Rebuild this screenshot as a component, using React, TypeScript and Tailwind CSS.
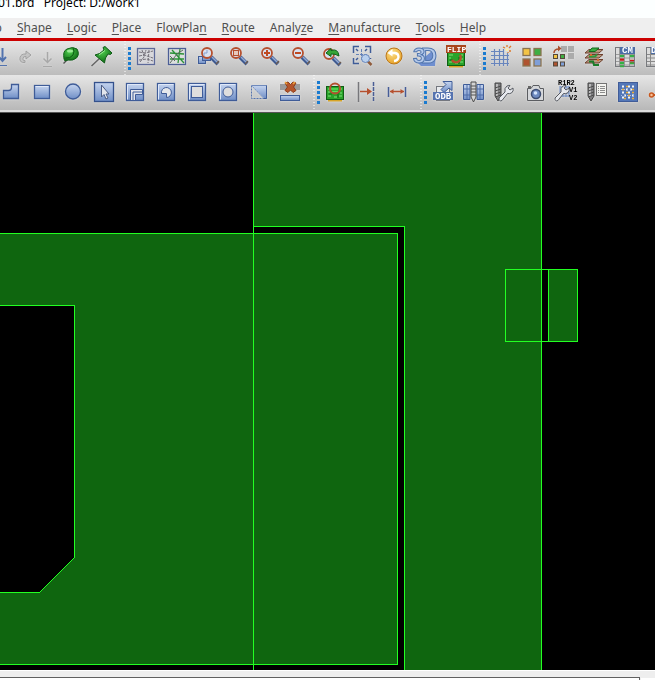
import type { ReactNode } from 'react';

const menus = [
  { before: '', key: 'S', after: 'hape' },
  { before: '', key: 'L', after: 'ogic' },
  { before: '', key: 'P', after: 'lace' },
  { before: 'FlowPla', key: 'n', after: '' },
  { before: '', key: 'R', after: 'oute' },
  { before: 'Analy', key: 'z', after: 'e' },
  { before: '', key: 'M', after: 'anufacture' },
  { before: '', key: 'T', after: 'ools' },
  { before: '', key: 'H', after: 'elp' },
];

// Shared paint servers for the toolbar icons
function IconDefs() {
  return (
    <svg className="absolute h-0 w-0" aria-hidden="true">
      <defs>
        <linearGradient id="steel" x1="0" y1="0" x2="0" y2="1">
          <stop offset="0" stopColor="#c6d5ef" />
          <stop offset="1" stopColor="#6f8ec6" />
        </linearGradient>
        <radialGradient id="leaf" cx="0.4" cy="0.3" r="0.8">
          <stop offset="0" stopColor="#4fd04f" />
          <stop offset="1" stopColor="#065c0c" />
        </radialGradient>
        <radialGradient id="gold" cx="0.4" cy="0.3" r="0.8">
          <stop offset="0" stopColor="#fbe08a" />
          <stop offset="1" stopColor="#e59a1c" />
        </radialGradient>
      </defs>
    </svg>
  );
}

function Tool({ label, width = 'w-[31px]', children }: { label: string; width?: string; children: ReactNode }) {
  return (
    <button
      type="button"
      aria-label={label}
      title={label}
      className={`flex h-[31px] shrink-0 justify-center overflow-hidden ${width}`}
    >
      <svg
        viewBox="0 0 31 31"
        fill="none"
        className="h-[31px] w-[31px] shrink-0 drop-shadow-[0_0_1px_#e0e0e0]"
        aria-hidden="true"
      >
        {children}
      </svg>
    </button>
  );
}

function Grip() {
  return (
    <div className="flex h-full w-[7px] shrink-0 items-center justify-between">
      <svg className="h-full w-[2px]" aria-hidden="true">
        <line x1="1" y1="0" x2="1" y2="40" stroke="#fff" strokeWidth="1" strokeDasharray="1 2" />
      </svg>
      <svg className="h-[23px] w-[3px]" aria-hidden="true">
        <line x1="1.5" y1="0" x2="1.5" y2="23" stroke="#1a7bd0" strokeWidth="3" strokeDasharray="3 2" />
      </svg>
    </div>
  );
}

const edge = '#3f5c98';

function Frame({ children }: { children?: ReactNode }) {
  return (
    <>
      <rect x="6.5" y="6.5" width="17" height="17" fill="url(#steel)" stroke={edge} strokeWidth="1.3" />
      <path d="M7.5 22.5V7.5H22.5" stroke="#dfe8f8" />
      {children}
    </>
  );
}

function Lens({ x, y, r = 5, children }: { x: number; y: number; r?: number; children?: ReactNode }) {
  return (
    <>
      <path d={`M${x + r - 1} ${y + r - 1}L${x + r + 6} ${y + r + 6}`} stroke="#3f5a91" strokeWidth="4" />
      <path d={`M${x + r} ${y + r - 1}L${x + r + 6} ${y + r + 5}`} stroke="#93aad4" strokeWidth="1.5" />
      <path d={`M${x + r + 4} ${y + r + 6}L${x + r + 7} ${y + r + 3}`} stroke="#6b5b50" strokeWidth="1.5" />
      <circle cx={x} cy={y} r={r} fill="#d9e2f1" stroke="#b5502f" strokeWidth="1.8" />
      {children}
    </>
  );
}

function Board({ y }: { y: number }) {
  return (
    <>
      <path d={`M8 ${y + 14.5}H22`} stroke="#d7a427" strokeWidth="2" />
      <rect x="6.5" y={y + 0.5} width="17" height="13" fill="#2aa32a" stroke="#0f5f14" />
      <path d={`M8 ${y + 3}H12M8 ${y + 6}H10M20 ${y + 3}H22M20 ${y + 7}H22M8 ${y + 10}H11M14 ${y + 11}H17M19 ${y + 10}H22`} stroke="#7fe27a" />
      <path d={`M9 ${y + 8}H12M18 ${y + 5}V${y + 12}`} stroke="#0c6d12" />
    </>
  );
}

function Drill({ x }: { x: number }) {
  return (
    <>
      <path d={`M${x} 6H${x + 6}V19L${x + 3} 24L${x} 19Z`} fill="#7e7e80" stroke="#444" />
      <path d={`M${x + 2} 7V19`} stroke="#d0d0d0" strokeWidth="1.5" />
      <path d={`M${x} 11L${x + 6} 9M${x} 14L${x + 6} 12M${x} 17L${x + 6} 15M${x} 20L${x + 6} 18`} stroke="#4d4d4d" />
    </>
  );
}

function Wrench({ x }: { x: number }) {
  return (
    <g transform={`translate(${x} 0)`}>
      <path
        d="M1 21L7 15Q6 11 9 9Q11 8 12 8.500L10 11L12 13L15 11Q16 14 13.500 16Q11.500 17 9.500 16.500L4 23.500Q1 25 1 21Z"
        fill="#e7e9ee"
        stroke="#55585f"
      />
    </g>
  );
}

function MainTools() {
  return (
    <>
      <Tool label="Save" width="w-[10px]">
        <path d="M12.500 7V20M9 16L12.500 20L16 16" stroke="#5273ae" strokeWidth="2" />
        <path d="M9 24.500H17" stroke="#5273ae" />
      </Tool>
      <Tool label="Redo">
        <path d="M15 21.500Q9 22 10 16.500Q11 12.500 16 13V10L21 14L16 18V15.500Q13 15 12.800 18Q13 20 15 19.500Z" fill="#c4c4c4" stroke="#a0a0a0" />
      </Tool>
      <Tool label="Download" width="w-[15px]">
        <path d="M14.500 11V21M10.500 17.500L14.500 21.500L18.500 17.500" stroke="#a8a8a8" strokeWidth="1.500" />
        <path d="M10 25.500H19" stroke="#a8a8a8" />
      </Tool>
      <Tool label="Fix">
        <path d="M7.500 22.500L12 18" stroke="#555" strokeWidth="1.500" />
        <path d="M8 18Q6.500 10 11 8Q17 5 21 8Q24 13 20.500 17Q17 20 12 19L9 20Z" fill="url(#leaf)" stroke="#11611a" />
        <path d="M9.500 17Q14 18 17 14Q19 10 17 7" stroke="#0b5b13" />
        <ellipse cx="14" cy="10" rx="3" ry="1.500" fill="#9aeb94" />
      </Tool>
      <Tool label="Unfix">
        <path d="M4.500 25L13 17" stroke="#666" strokeWidth="1.500" />
        <path d="M8 14L12.500 12.500L17 9L16 6.500L18 5.500L25 12L23.500 13.500L21 13L18.500 17L17.500 22Z" fill="url(#leaf)" stroke="#0e5a16" />
        <path d="M12 14L18 9.500" stroke="#a2ec9b" />
      </Tool>
    </>
  );
}

function ViewTools() {
  return (
    <>
      <Tool label="Unrats all">
        <rect x="6.500" y="7.500" width="17" height="16" fill="#d8d8dc" stroke="#5d6a9a" strokeWidth="1.300" />
        <path d="M8 11L14 12L22 10M8 15L13 14L22 17M9 21L13 16L15 9M18 9L17 22M8 19L16 18L22 20M11 9L13 15" stroke="#77737c" strokeDasharray="3 1" />
      </Tool>
      <Tool label="Rats all">
        <rect x="6.500" y="7.500" width="17" height="16" fill="#dcdfdd" stroke="#4c5e96" strokeWidth="1.300" />
        <path d="M8 12L22 13M10 9L22 22M18 8L16 22M8 18H22" stroke="#2d9238" strokeWidth="1.300" />
        <path d="M8 22L15 13L21 9M8 15L13 20" stroke="#5c6a60" />
      </Tool>
      <Tool label="Zoom points">
        <rect x="5.500" y="15.500" width="7" height="7" fill="url(#steel)" stroke={edge} />
        <rect x="9.500" y="11.500" width="8" height="8" fill="url(#steel)" stroke={edge} />
        <Lens x={14} y={12}>
          <path d="M11 15V12H14V9" stroke="#8aa2cf" />
        </Lens>
      </Tool>
      <Tool label="Zoom fit">
        <Lens x={12} y={12}>
          <rect x="9.500" y="9.500" width="5" height="5" fill="#e8c8bb" stroke="#b5502f" />
        </Lens>
      </Tool>
      <Tool label="Zoom in">
        <Lens x={12} y={12}>
          <path d="M12 9V15M9 12H15" stroke="#c04a22" strokeWidth="2" />
        </Lens>
      </Tool>
      <Tool label="Zoom out">
        <Lens x={12} y={12}>
          <path d="M9 12H15" stroke="#c04a22" strokeWidth="2" />
        </Lens>
      </Tool>
      <Tool label="Zoom previous">
        <Lens x={12} y={13}>
          <path d="M9 12L14 7.500V9.500Q21 7 22 15Q18 12.500 14 13V15.500Z" fill="#37a537" stroke="#0e6119" />
        </Lens>
      </Tool>
      <Tool label="Zoom center">
        <path d="M5.500 12V5.500H11M17 5.500H22.500V12M22.500 17V18M11 22.500H5.500V17" stroke={edge} strokeWidth="1.500" />
        <path d="M13.500 8V19M8 13.500H19" stroke="#6482b8" strokeDasharray="3 1" />
        <path d="M8 8L10 10M19 8L17 10M8 19L10 17" stroke={edge} strokeWidth="1.500" />
        <path d="M19.500 20L23.500 24" stroke="#8f5b3c" strokeWidth="2.500" />
        <circle cx="17.500" cy="17.500" r="4" fill="#b9d0ee" stroke="#6886bb" />
      </Tool>
      <Tool label="Refresh">
        <circle cx="15" cy="15" r="8" fill="url(#gold)" stroke="#b87519" />
        <path d="M11 12H16Q19.500 12.500 19.500 16Q19 19.500 15 20" stroke="#fff" strokeWidth="2.300" />
        <path d="M13.500 8L8.500 12L13.500 15.500Z" fill="#fff" />
      </Tool>
      <Tool label="3D view">
        <path d="M8 22L11 25H25L26 12L23 9Z" fill="#6f8fd0" />
        <g fontSize="22" fontWeight="bold" fontFamily="Liberation Sans, sans-serif" fill="#b3c8ea" stroke="#5276ae">
          <text x="11" y="22">D</text>
          <text x="3" y="22">3</text>
        </g>
      </Tool>
      <Tool label="Flip design">
        <Board y={11} />
        <path d="M11 19A4 4 0 0 0 19 14" stroke="#b5502f" strokeWidth="2.500" />
        <rect x="5" y="4" width="20" height="8" fill="#a9451c" />
        <text x="6" y="11" fontSize="8" fontWeight="bold" fontFamily="Liberation Mono, monospace" fill="#fff">
          FLIP
        </text>
      </Tool>
    </>
  );
}

function SetupTools() {
  return (
    <>
      <Tool label="Grid toggle">
        <path d="M8.500 8V25M13.500 8V25M17.500 8V25M21.500 12V25M5 10.500H18M5 14.500H23M5 18.500H23M5 22.500H23" stroke="#6885bd" strokeWidth="1.200" />
        <path d="M21 4V6M17 6L19 7M25 5L23 7M25 10H23M22 11V12" stroke="#dc7a2c" strokeWidth="1.300" />
        <circle cx="21" cy="8.500" r="1.500" fill="#fff0a8" />
      </Tool>
      <Tool label="Color">
        <rect x="6" y="7.500" width="7" height="7" fill="#f3c445" stroke="#8a7350" strokeWidth="1.300" />
        <rect x="17" y="7.500" width="7" height="7" fill="#3eae43" stroke="#8a7350" strokeWidth="1.300" />
        <rect x="6" y="18" width="7" height="7" fill="#b0532f" stroke="#8a7350" strokeWidth="1.300" />
        <rect x="17" y="18" width="7" height="7" fill="#7f9fd8" stroke="#8a7350" strokeWidth="1.300" />
      </Tool>
      <Tool label="Assign color">
        <path d="M13 5H19V11H13ZM20 5H26V11H20ZM20 12H26V18H20Z" fill="#ababab" />
        <path d="M6 12Q6 8 11 8" stroke="#a9502f" strokeWidth="1.500" />
        <path d="M10 4.500L13.500 7.500L10 10.500Z" fill="#a9502f" />
        <rect x="5.500" y="13.500" width="4" height="4" fill="#f3c445" stroke="#55483a" />
        <rect x="12.500" y="13.500" width="4" height="4" fill="#3eae43" stroke="#55483a" />
        <rect x="5.500" y="21" width="4" height="4" fill="#b0532f" stroke="#55483a" />
        <rect x="12.500" y="21" width="4" height="4" fill="#7f9fd8" stroke="#55483a" />
      </Tool>
      <Tool label="Cross section">
        <path d="M6 22L10 18.500H24L20 22ZM6 17L10 13.500H24L20 17ZM6 12L10 8.500H24L20 12Z" fill="#b9977f" stroke="#6c3f2c" />
        <path d="M10 10.500H16L20 7H13Z" fill="#3bae43" stroke="#116b1d" />
        <path d="M10 15.500H16L18 13.500" stroke="#2e9a39" strokeWidth="2" />
        <path d="M10 20.500H14L15 24H20" stroke="#1b7d2a" strokeWidth="2" />
        <path d="M12 13V15M19 18V20" stroke="#d66b2e" strokeWidth="2" />
      </Tool>
      <Tool label="Constraint manager">
        <rect x="5.500" y="6.500" width="19" height="19" fill="#dcdcdc" stroke="#77797d" />
        <rect x="10" y="6" width="15" height="7" fill="#4d6da6" />
        <text x="12" y="12" fontSize="9" fontWeight="bold" fontFamily="Liberation Mono, monospace" fill="#fff">
          CM
        </text>
        <path d="M10 15H14M20 15H24M10 22H14M10 25H14M20 22H24" stroke="#35b044" strokeWidth="2.500" />
        <path d="M10 18.500H14M20 20H24" stroke="#cf1515" strokeWidth="2.500" />
        <path d="M6 13.500H25M6 17H25M6 20.500H25M6 24H25M9.500 7V25M14.500 13V25M19.500 13V25" stroke="#8a8a8a" strokeWidth="0.800" />
      </Tool>
      <Tool label="Datatips">
        <rect x="5.500" y="6.500" width="19" height="19" fill="#dcdcdc" stroke="#77797d" />
        <rect x="9" y="6" width="16" height="7" fill="#4d6da6" />
        <text x="10" y="12" fontSize="9" fontWeight="bold" fontFamily="Liberation Mono, monospace" fill="#fff">
          D
        </text>
        <path d="M6 13.500H25M6 17H25M6 20.500H25M6 24H25M9.500 7V25M14.500 13V25" stroke="#8a8a8a" />
      </Tool>
    </>
  );
}

function ShapeTools() {
  return (
    <>
      <Tool label="Shape add">
        <path d="M7.500 13.500H12.500Q15.500 13.500 15.500 10.500V7.500H22.500V21.500H7.500Z" fill="url(#steel)" stroke={edge} strokeWidth="1.300" />
      </Tool>
      <Tool label="Shape add rectangle">
        <rect x="7.500" y="8.500" width="15" height="13" fill="url(#steel)" stroke={edge} strokeWidth="1.300" />
        <path d="M8.500 9.500H21.500" stroke="#dfe8f8" />
      </Tool>
      <Tool label="Shape add circle">
        <circle cx="15" cy="14.500" r="7.500" fill="url(#steel)" stroke={edge} strokeWidth="1.300" />
      </Tool>
      <Tool label="Shape select">
        <rect x="5.500" y="5.500" width="19" height="19" fill="url(#steel)" stroke="#34518c" strokeWidth="1.300" />
        <path d="M12.500 8V20L15 17.500L17 22L19 21L17 17H20Z" fill="#e3e6ec" stroke="#4b5d85" />
      </Tool>
      <Tool label="Shape void polygon">
        <Frame>
          <path d="M10.500 23V12.500H22.500V17.500H15.500V23" fill="#e4e7ec" stroke={edge} />
          <path d="M13 23V15H22.500" stroke={edge} />
        </Frame>
      </Tool>
      <Tool label="Shape edit boundary">
        <Frame>
          <path d="M10.500 16.500A5 5 0 1 1 15.500 20.500V16.500Z" fill="#e4e7ec" stroke={edge} />
        </Frame>
      </Tool>
      <Tool label="Shape void rectangle">
        <Frame>
          <rect x="9.500" y="9.500" width="11" height="11" fill="#dedede" stroke={edge} />
        </Frame>
      </Tool>
      <Tool label="Shape void circle">
        <Frame>
          <circle cx="15" cy="15" r="5" fill="#dedede" stroke={edge} />
        </Frame>
      </Tool>
      <Tool label="Island delete">
        <path d="M7.500 8.500H22.500V21.500H20Z" fill="url(#steel)" stroke="#6f8abc" />
        <path d="M22.500 8.500V21.500H19" stroke={edge} />
        <path d="M7.500 8.500V21.500H20" stroke="#5473ae" strokeDasharray="2 1" />
        <path d="M7.500 8.500L20 21.500" stroke="#aab8d2" strokeDasharray="2 1" />
      </Tool>
      <Tool label="Void delete">
        <path d="M5 7H25V13H5Z" fill="#9b9b9b" />
        <path d="M10 6L13 5L15.500 7.500L18 5L21 6L18.500 10L21 13.500L18 15.500L15.500 13L13 15.500L10 13.500L12.500 10Z" fill="#b5562b" stroke="#8f3f1c" />
        <path d="M10 5L12 7M20 5L18 7" stroke="#f0a53b" strokeWidth="1.500" />
        <rect x="5.500" y="18.500" width="19" height="5" fill="url(#steel)" stroke={edge} />
      </Tool>
    </>
  );
}

function MeasureTools() {
  return (
    <>
      <Tool label="Add component">
        <Board y={9} />
        <path d="M12 12H18M12 14.500H18" stroke="#5be35b" strokeWidth="1.500" />
        <circle cx="15" cy="11.500" r="5" stroke="#b5502f" strokeWidth="2" />
      </Tool>
      <Tool label="Slide">
        <path d="M7.500 5V25" stroke="#77777b" strokeWidth="1.500" />
        <path d="M22.500 5V25" stroke="#4a5d94" strokeWidth="1.500" strokeDasharray="4 1" />
        <path d="M9 14.500H18" stroke="#b5502f" strokeWidth="1.500" />
        <path d="M16 11L21 14.500L16 18Z" fill="#b5502f" />
      </Tool>
      <Tool label="Show measure">
        <path d="M6.500 10V20M23.500 10V20" stroke="#465c97" strokeWidth="1.500" />
        <path d="M8 14.500H22" stroke="#b5502f" strokeWidth="1.500" />
        <path d="M11.500 12L8 14.500L11.500 17ZM18.500 12L22 14.500L18.500 17Z" fill="#b5502f" />
      </Tool>
    </>
  );
}

function ExportTools() {
  return (
    <>
      <Tool label="ODB export">
        <rect x="9.500" y="9.500" width="13" height="14" fill="#e9ebee" stroke="#74777f" />
        <path d="M16 4.500H25V13.500L22 11L17 15.500L14 12.500L19 7.500Z" fill="url(#steel)" stroke={edge} />
        <rect x="6" y="15" width="20" height="8" fill="#5573b0" />
        <text x="8" y="22" fontSize="9" fontWeight="bold" fontFamily="Liberation Mono, monospace" fill="#fff">
          ODB
        </text>
      </Tool>
      <Tool label="NC parameters">
        <path d="M5.500 7.500H12V22.500H5.500ZM19 7.500H25.500V22.500H19Z" fill="url(#steel)" stroke={edge} />
        <path d="M6 12H12M6 18H12M9 8V22M19 12H25M19 18H25M22 8V22" stroke="#4f6da8" />
        <path d="M13 5H18V20L15.500 25L13 20Z" fill="#d4d4d4" stroke="#4a4a4a" />
        <path d="M13 9H18M13 12H18M13 15H18M13 18H18" stroke="#555" />
      </Tool>
      <Tool label="NC drill">
        <Drill x={6} />
        <Wrench x={9} />
      </Tool>
      <Tool label="Artwork">
        <path d="M7.500 11.500H11L13 8.500H19L20 11.500H23.500V23.500H7.500Z" fill="#d5d7da" stroke="#5b5d61" />
        <path d="M8 10H11" stroke="#666" strokeWidth="2" />
        <circle cx="16" cy="17" r="4.500" fill="#6e8ac0" stroke="#3c4c70" strokeWidth="1.500" />
        <circle cx="15.500" cy="16" r="1.800" fill="#d5e4fb" />
      </Tool>
      <Tool label="Backdrill">
        <path d="M9 10H18M9 13H18M9 16H18M9 19H18M9 9V20M12 9V20M15 9V20M18 9V20" stroke="#6b89c4" />
        <Wrench x={3} />
        <g fill="#000" fontSize="7" fontWeight="bold" fontFamily="Liberation Mono, monospace">
          <text x="7" y="8">R1R2</text>
          <text x="18" y="15">V1</text>
          <text x="18" y="23">V2</text>
        </g>
      </Tool>
      <Tool label="Drill legend">
        <Drill x={6} />
        <rect x="14.500" y="6.500" width="10" height="12" fill="#f4f4f0" stroke="#737373" />
        <path d="M16 9.500H23M16 11.500H23M16 13.500H23M16 15.500H23" stroke="#8b8b8b" strokeDasharray="1 1 6 0" />
      </Tool>
      <Tool label="Drill customization">
        <rect x="5.500" y="5.500" width="19" height="19" fill="#5377b8" stroke="#405c98" />
        <path d="M9 9.500H11M15 9.500H17M19 9.500H21M13 12.500H15M17 12.500H19M9 15.500H11M15 15.500H17M11 18.500H13M19 18.500H21M15 20.500H17M9 20.500H11" stroke="#f2f5fa" strokeWidth="1.800" />
        <path d="M8 12.500H22M8 18.500H22" stroke="#a9bde0" strokeDasharray="1 2" />
        <path d="M13 9.500H15M19 12.500H21M9 12.500H11M13 15.500H15M19 15.500H21M15 18.500H17M19 21.500H21M11 21.500H13" stroke="#f0ad32" strokeWidth="1.500" />
      </Tool>
      <Tool label="Pin route">
        <path d="M7 18H18" stroke="#c8581f" strokeWidth="2" />
        <circle cx="7.500" cy="18" r="2" fill="#f5c19a" stroke="#c8581f" strokeWidth="1.500" />
      </Tool>
    </>
  );
}

// Copper shapes, drawn one unit per pixel from the top left of the canvas
function DesignCanvas() {
  return (
    <svg
      className="min-h-[300px] w-full flex-1 bg-black"
      role="img"
      aria-label="Board layout"
      shapeRendering="crispEdges"
    >
      <g fill="#0f660f">
        <rect x="253" y="0" width="289" height="100%" />
        <rect x="0" y="113" width="405" height="100%" fill="#000" />
        <rect x="0" y="120" width="398" height="432" />
        <rect x="542" y="156" width="36" height="73" />
      </g>
      <path d="M0 192H74V445L39 479H0Z" fill="#000" />
      <rect x="542" y="156" width="6" height="73" fill="#000" />
      <g fill="none" stroke="#22ff22">
        <path d="M253.500 113.500H404.500V1200" />
        <path d="M0 120.500H397.500V551.500H0" />
        <path d="M253.500 0V1200M541.500 0V1200" />
        <path d="M505.500 156.500H577.500V228.500H505.500ZM548.500 156.500V228.500" />
        <path d="M0 192.500H74.500V444.500L39.500 479.500H0" />
      </g>
    </svg>
  );
}

export default function App() {
  return (
    <div className="flex h-screen flex-col overflow-hidden bg-[#eeeeee] font-['Noto_Sans',sans-serif]">
      <IconDefs />
      <header className="flex h-[18px] shrink-0 items-start overflow-hidden bg-[#fcffff]">
        <h1 className="-mt-[6px] -ml-[2px] whitespace-pre text-[12px] leading-[18px] text-black">
          01.brd   Project: D:/work1
        </h1>
      </header>

      <nav className="flex h-[20px] shrink-0 items-center gap-[15px] bg-[#efefef] text-[12px] leading-[20px] text-[#505050]">
        <button type="button" className="flex w-[2px] shrink-0 justify-end">
          p
        </button>
        {menus.map((menu) => (
          <button type="button" key={menu.before + menu.key} className="shrink-0">
            {menu.before}
            <span className="underline underline-offset-2">{menu.key}</span>
            {menu.after}
          </button>
        ))}
      </nav>

      <div className="h-[3px] shrink-0 bg-[#cc0000]" />

      <div className="flex h-[34px] shrink-0 items-start overflow-hidden bg-linear-to-b from-[#e6e6e6] to-[#bcbcbc]">
        <div className="flex pr-[6px]">
          <MainTools />
        </div>
        <Grip />
        <div className="flex pr-[7px]">
          <ViewTools />
        </div>
        <Grip />
        <div className="flex">
          <SetupTools />
        </div>
      </div>

      <div className="flex h-[35px] shrink-0 items-center overflow-hidden bg-linear-to-b from-[#e6e6e6] to-[#b8b8b8]">
        <div className="-ml-1 flex pr-[7px]">
          <ShapeTools />
        </div>
        <Grip />
        <div className="flex pr-[7px]">
          <MeasureTools />
        </div>
        <Grip />
        <div className="flex">
          <ExportTools />
        </div>
      </div>
      <div className="h-[3px] shrink-0 border-b border-[#555] bg-[#dcdcdc]" />

      <DesignCanvas />

      <footer className="flex h-[10px] shrink-0 items-end gap-px border-t border-white bg-[#eeeeee]">
        <div className="h-[3px] flex-1 border-t border-r border-[#606060] bg-white" />
        <div className="h-[2px] w-[14px] bg-white" />
      </footer>
    </div>
  );
}
